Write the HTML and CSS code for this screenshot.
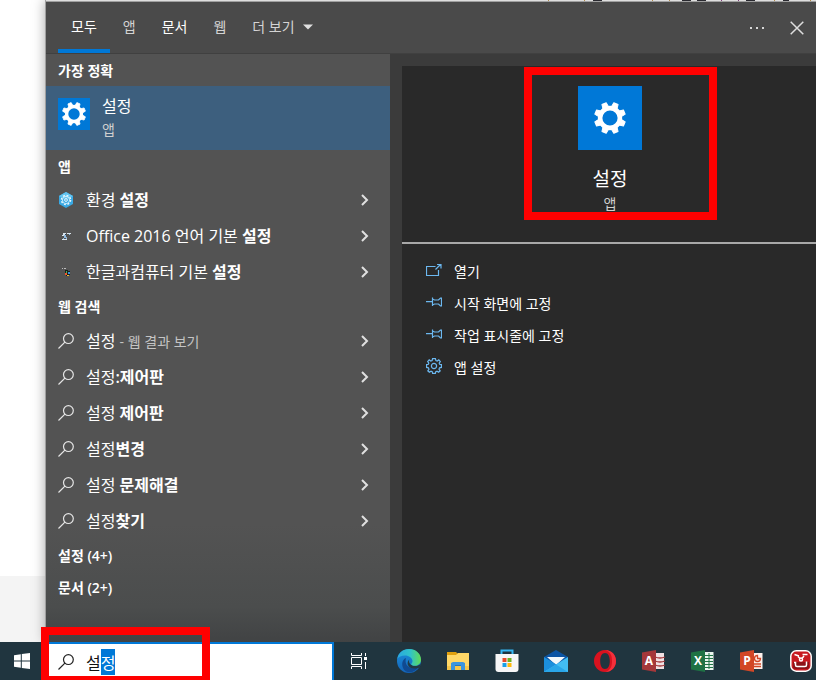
FILE: index.html
```html
<!DOCTYPE html>
<html lang="ko">
<head>
<meta charset="utf-8">
<title>검색</title>
<link rel="stylesheet" href="styles.css">
</head>
<body>
<svg class="defs" aria-hidden="true">
  <symbol id="gear" viewBox="-16 -16 32 32">
    <circle r="9.9" fill="none" stroke="#fff" stroke-width="4.6"/>
    <g fill="#fff" stroke="#fff" stroke-width="1" stroke-linejoin="round">
      <path id="tooth" d="M-3-11-2.300-15.500H2.300L3-11z" transform="rotate(22.500)"/>
      <use href="#tooth" transform="rotate(45)"/>
      <use href="#tooth" transform="rotate(90)"/>
      <use href="#tooth" transform="rotate(135)"/>
      <use href="#tooth" transform="rotate(180)"/>
      <use href="#tooth" transform="rotate(225)"/>
      <use href="#tooth" transform="rotate(270)"/>
      <use href="#tooth" transform="rotate(315)"/>
    </g>
  </symbol>
  <symbol id="lens" viewBox="0 0 16 16"><circle cx="10.4" cy="5.6" r="4.9"/><path d="M6.9 9.1.5 15.5"/></symbol>
  <symbol id="chev" viewBox="0 0 8 12"><path d="m1 1 5 5-5 5"/></symbol>
  <symbol id="pin" viewBox="0 0 16 10"><path d="M0 4.6h6M6.5.5v8.5M6.5 2l2 1h4l2-2h1v8h-1l-2-2h-4l-2 1"/></symbol>
</svg>

<div class="screen">
  <main class="workspace">
    <div class="desktop"><div class="sheet"></div></div>
    <section class="search-panel" aria-label="검색">
      <div class="backdrop">
        <svg viewBox="0 0 276 1" width="276" height="1"><path fill="#b08a4a" d="M8 0h1v1H8zM44 0h1v1h-1zM112 0h1v1h-1zM129 0h1v1h-1zM234 0h1v1h-1zM270 0h1v1h-1z"/><path fill="#7f3d7a" d="M181 0h1v1h-1zM198 0h1v1h-1z"/><path fill="#2a2a30" d="M53 0h9v1h-9zM142 0h9v1h-9zM157 0h9v1h-9zM206 0h9v1h-9zM243 0h6v1h-6z"/></svg>
      </div>
      <header class="topbar">
        <nav class="tabs">
          <button class="tab active">모두</button>
          <button class="tab dim">앱</button>
          <button class="tab">문서</button>
          <button class="tab dim">웹</button>
          <button class="tab dim">더 보기 <svg class="caret" viewBox="0 0 10 6"><path d="M0 .5h10L5 5.5z"/></svg></button>
        </nav>
        <div class="window-actions">
          <button aria-label="옵션"><svg class="dots" viewBox="0 0 14 2"><path d="M0 0h2v2H0zM6 0h2v2H6zM12 0h2v2h-2z"/></svg></button>
          <button aria-label="닫기"><svg class="close" viewBox="0 0 14 14"><path d="m.7.7 12.6 12.6M13.3.7.7 13.3"/></svg></button>
        </div>
      </header>

      <div class="columns">
        <div class="results">
          <h2>가장 정확</h2>
          <button class="best">
            <span class="tile small"><svg><use href="#gear"/></svg></span>
            <span class="best-text"><span class="best-name">설정</span><span class="kind">앱</span></span>
          </button>

          <h2>앱</h2>
          <button class="row">
            <svg class="icon" viewBox="0 0 16 16"><path fill="#39a9e4" d="M8 0l7 4v8l-7 4-7-4V4z"/><path fill="#63c4f0" d="M8 0l7 4-7 4-7-4z"/><g fill="none" stroke="#e6f7ff"><circle cx="8" cy="8" r="1.4"/><circle cx="8" cy="8" r="4.6" stroke-width="1.4" stroke-dasharray="1.9 1.713"/><circle cx="8" cy="8" r="3.6" stroke-width=".8"/></g></svg>
            <span>환경 <b>설정</b></span><svg class="chev"><use href="#chev"/></svg>
          </button>
          <button class="row">
            <svg class="icon" viewBox="0 0 16 16"><path fill="#d9e4ec" d="M5 5h3v2H5zM9 5h4v1H9zM4 7h2v1H4zM4 11h5v1H4z"/><path fill="#8fb9de" d="M6 7h2v3H6zM5 10h1v1H5zM8 9h1v2H8zM11 6h1v1h-1z"/><path fill="#29435c" d="M7 6h1v1H7z"/></svg>
            <span>Office 2016 언어 기본 <b>설정</b></span><svg class="chev"><use href="#chev"/></svg>
          </button>
          <button class="row">
            <svg class="icon" viewBox="0 0 16 16"><path fill="#bbb" d="M4 4h1v1H4zM6 4h2v1H6z"/><path fill="#1c1f1e" d="M7 6h3v1h2v4h-1v1H8v-1H7z"/><path fill="#ef5a2c" d="M7 9h2v2H7z"/><path fill="#41b357" d="M8 7h1v2H8z"/><path fill="#2f91dc" d="M10 8h2v2h-2z"/><path fill="#f5b52e" d="M9 11h2v1H9z"/></svg>
            <span>한글과컴퓨터 기본 <b>설정</b></span><svg class="chev"><use href="#chev"/></svg>
          </button>

          <h2>웹 검색</h2>
          <div class="web">
            <button class="row"><svg class="icon lens"><use href="#lens"/></svg><span>설정 <span class="note">- 웹 결과 보기</span></span><svg class="chev"><use href="#chev"/></svg></button>
            <button class="row"><svg class="icon lens"><use href="#lens"/></svg><span>설정<b>:제어판</b></span><svg class="chev"><use href="#chev"/></svg></button>
            <button class="row"><svg class="icon lens"><use href="#lens"/></svg><span>설정 <b>제어판</b></span><svg class="chev"><use href="#chev"/></svg></button>
            <button class="row"><svg class="icon lens"><use href="#lens"/></svg><span>설정<b>변경</b></span><svg class="chev"><use href="#chev"/></svg></button>
            <button class="row"><svg class="icon lens"><use href="#lens"/></svg><span>설정 <b>문제해결</b></span><svg class="chev"><use href="#chev"/></svg></button>
            <button class="row"><svg class="icon lens"><use href="#lens"/></svg><span>설정<b>찾기</b></span><svg class="chev"><use href="#chev"/></svg></button>
          </div>
          <h2>설정 (4+)</h2>
          <h2>문서 (2+)</h2>
        </div>

        <article class="detail">
          <div class="hero">
            <span class="tile large"><svg><use href="#gear"/></svg></span>
            <h1>설정</h1>
            <span class="kind">앱</span>
            <span class="mark mark-hero"></span>
          </div>
          <div class="actions">
            <button><svg viewBox="0 0 16 12"><path d="M9.5 2.5H.5v9h12V6M9.5 5.5l5-5M11 .5h4v4"/></svg>열기</button>
            <button><svg viewBox="0 0 16 10"><use href="#pin"/></svg>시작 화면에 고정</button>
            <button><svg viewBox="0 0 16 10"><use href="#pin"/></svg>작업 표시줄에 고정</button>
            <button><svg viewBox="-8 -8 16 16"><circle r="2.6"/><path d="M-1.4-7.4H1.4L1.9-5.5 3.2-5 4.8-6.1 6.3-4.5 5.2-2.9 5.6-1.7 7.4-1.4V1.4L5.6 1.8 5 3.1 6.2 4.8 4.6 6.3 3 5.2 1.8 5.7 1.4 7.4H-1.4L-1.8 5.7-3 5.2-4.6 6.3-6.2 4.8-5 3.1-5.6 1.8-7.4 1.4V-1.4L-5.6-1.7-5.2-2.9-6.3-4.5-4.8-6.1-3.2-5-1.9-5.5Z"/></svg>앱 설정</button>
          </div>
        </article>
      </div>
    </section>
  </main>

  <footer class="taskbar">
    <button class="start" aria-label="시작"><svg viewBox="0 0 16 16"><path fill="#fff" d="M0 2.2 6.8 1.2v6.3H0zM7.8 1 16 0v7.5H7.8zM0 8.5h6.8v6.3L0 13.8zM7.8 8.5H16V16l-8.2-1.1z"/></svg></button>
    <label class="searchbox">
      <svg class="lens"><use href="#lens"/></svg>
      <input id="query" type="text" value="설정" aria-label="검색어" spellcheck="false" autocomplete="off">
      <span class="mark mark-search"></span>
    </label>
    <button class="taskview" aria-label="작업 보기"><svg viewBox="0 0 16 16" width="16" height="16"><path fill="none" stroke="#fff" d="M.5 0v2.5h10V0M.5 4.5h10v7H.5zM.5 16v-2.500h10V16M14.500 0v3M14.500 9v7"/><path fill="#fff" d="M13 4h3v3h-3z"/></svg></button>
    <button class="app" aria-label="Edge"><svg viewBox="0 0 24 24" width="24" height="24">
      <defs><linearGradient id="eg" x1="0" x2="1"><stop offset="0" stop-color="#2aa7e0"/><stop offset=".55" stop-color="#30c3c9"/><stop offset="1" stop-color="#62dc55"/></linearGradient><linearGradient id="eb" x1="0" y1="0" x2="0" y2="1"><stop offset="0" stop-color="#1b91dc"/><stop offset="1" stop-color="#1463b7"/></linearGradient></defs>
      <circle cx="12" cy="12" r="12" fill="url(#eb)"/>
      <path fill="#104a91" d="M9 9c-2 7 3 12 12.500 9C18 24 9 25.500 6 19 4 14 6 10 9 9z"/>
      <path fill="#223a44" d="M12.500 10.500c-1.500 2 .2 6 5 6.300 3 .2 5-.8 6.500-2.300l-1.500 4c-3 1.500-9 1.500-11-1.500-1.500-2.300-.8-5.300 1-6.500z"/>
      <path fill="url(#eg)" d="M.3 10C1 4 6 0 12 0c7 0 12 5 12 10.500 0 4-3 6.300-6.300 6.300-2 0-3.500-.6-3.500-1.500s1.300-1.300 1.300-3.300C15.500 9 12 6.500 8 6.500 4.500 6.500 1.500 8 .3 10z"/>
    </svg></button>
    <button class="app" aria-label="파일 탐색기"><svg viewBox="0 0 22 19" width="22" height="19"><path fill="#e0a00d" d="M0 0h9l2 2v3H0z"/><path fill="#ffd867" d="M0 3h9l2-2h11v17H0z"/><path fill="#f5c64a" d="M0 14h22v4H0z"/><path fill="#3a95df" d="M4 18v-7l2-1h10l2 1v7h-4v-4H8v4z"/><path fill="#2374be" d="M8 13h6v1H8z"/></svg></button>
    <button class="app" aria-label="Store"><svg viewBox="0 0 24 24" width="24" height="24"><path fill="none" stroke="#35b6f2" stroke-width="2" d="M6.500 6V1.500h11V6"/><path fill="#f6f6f6" d="M.5 5h23v15q0 3-3 3h-17q-3 0-3-3z"/><path fill="#e84a2a" d="M7.500 9h4v4h-4z"/><path fill="#6cb021" d="M12.500 9h4v4h-4z"/><path fill="#18a0e8" d="M7.500 14h4v4h-4z"/><path fill="#ffb90a" d="M12.500 14h4v4h-4z"/></svg></button>
    <button class="app" aria-label="메일"><svg viewBox="0 0 24 22" width="24" height="22"><path fill="#0c55a4" d="M0 7 12 0l12 7v8H0z"/><path fill="#f3f8fb" d="M3 7h18l-9 8z"/><path fill="#1c8fdc" d="M0 7l24 14.500V22H0z"/><path fill="#42bdf3" d="M24 7 0 22h24z"/><path fill="#2aa6e8" d="m0 22 12-7.500L24 22z"/></svg></button>
    <button class="app" aria-label="Opera"><svg viewBox="0 0 22 22" width="22" height="22"><path fill="#d9121f" fill-rule="evenodd" d="M11 0C4.500 0 0 5 0 11s4.500 11 11 11 11-5 11-11S17.500 0 11 0zm0 3c3.200 0 4.800 3.500 4.800 8S14.200 19 11 19s-4.800-3.500-4.800-8S7.800 3 11 3z"/><path fill="#f5303b" d="M11 0c7 0 11 5 11 11s-4 11-11 11c6-2 7-6 7-11S17 2 11 0z"/></svg></button>
    <button class="app office access"><svg viewBox="0 0 24 22" width="24" height="22"><path fill="#f0e1e3" d="M13 3h9v16h-9z"/><path stroke="#a4373a" stroke-width="1.300" fill="none" d="M13 7q5 2 10 0M13 11q5 2 10 0M13 15q5 2 10 0"/><path fill="#a4373a" d="M0 2.500 14 0v22L0 19.500z"/></svg><span>A</span></button>
    <button class="app office excel"><svg viewBox="0 0 24 22" width="24" height="22"><path fill="#e9f5ed" d="M13 2h9.500v18H13z"/><path stroke="#1f7244" fill="none" d="M13 5.500h9M13 8.500h9M13 11.500h9M13 14.500h9M13 17.500h9M18 3v16"/><path fill="#1f7244" d="M0 2.500 14 0v22L0 19.500z"/></svg><span>X</span></button>
    <button class="app office ppt"><svg viewBox="0 0 24 22" width="24" height="22"><path fill="#fdf0eb" d="M13 3h9.500v16H13z"/><path stroke="#d24726" stroke-width="1.300" fill="none" d="M17.500 5.500a3 3 0 1 0 3 3h-3zM14 14h7M14 16.500h7"/><path fill="#d24726" d="M0 2.500 14 0v22L0 19.500z"/></svg><span>P</span></button>
    <button class="app" aria-label="캡처"><svg viewBox="0 0 22 22" width="22" height="22"><rect x=".8" y=".8" width="20.400" height="20.400" rx="5.500" fill="#c71920" stroke="#fff" stroke-width="1.500"/><path fill="#8d1218" d="M3 12h16v5q0 2-2 2H5q-2 0-2-2z"/><g fill="none" stroke="#fff" stroke-width="1.500"><path d="M4.500 4.500 9 6M12.500 4.500h5M8 6.500l2 2M14 6l-2 2.500"/><circle cx="11" cy="9.500" r="1.500"/><path d="M4 12.500h1.500V15q0 1.500 1.500 1.500h8q1.500 0 1.500-1.500v-3.500"/></g></svg></button>
  </footer>
</div>
<script src="script.js"></script>
</body>
</html>
```
FILE: script.js
```js
// The completed syllable stays selected so that typing replaces it.
const query = document.getElementById("query");
query.focus();
query.setSelectionRange(1, 2);
```
FILE: styles.css
```css
* { box-sizing: border-box; }

body {
  margin: 0;
  overflow: hidden;
  color: #fff;
  font: 14px/20px "Open Sans", "Noto Sans CJK KR", sans-serif;
}

button {
  border: 0;
  padding: 0;
  background: none;
  color: inherit;
  font: inherit;
  text-align: left;
}

svg { display: block; flex: none; }
.defs { position: absolute; width: 0; height: 0; }

.screen {
  display: flex;
  flex-direction: column;
  height: 100vh;
}

.workspace {
  flex: 1;
  min-height: 0;
  display: grid;
  grid-template-columns: 45px 1fr;
}

.desktop {
  display: flex;
  flex-direction: column;
  justify-content: flex-end;
  background: #fff;
}
.sheet { height: 66px; background: #f4f4f4; }

.search-panel {
  display: flex;
  flex-direction: column;
  min-width: 0;
  border-left: 1px solid #a0a0a0;
  background: #3b3b3b;
  box-shadow: 0 0 12px rgba(0, 0, 0, 0.35);
}
.backdrop {
  display: flex;
  justify-content: flex-end;
  height: 2px;
  border-bottom: 1px solid #a0a0a0;
  background: #dedede;
}

.topbar {
  display: flex;
  justify-content: space-between;
  height: 52px;
  padding-left: 12px;
  border-bottom: 1px solid #404040;
  background: #4a4a4a;
}
.tabs { display: flex; }
.tab {
  display: flex;
  align-items: center;
  gap: 8px;
  padding: 5px 13px 3px;
  border-bottom: 4px solid transparent;
}
.tab.dim { color: #d4d4d4; }
.tab.active { border-bottom-color: #0078d7; }
.caret { width: 10px; height: 6px; fill: #e0e0e0; }

.window-actions { display: flex; }
.window-actions button {
  display: flex;
  align-items: center;
  justify-content: center;
  width: 42px;
}
.window-actions button:last-child { width: 38px; }
.dots { width: 16px; height: 2px; fill: #d8d8d8; }
.close { width: 14px; height: 14px; stroke: #dedede; stroke-width: 1.5; }

.columns {
  flex: 1;
  min-height: 0;
  display: grid;
  grid-template-columns: 344px 1fr;
  column-gap: 12px;
}

.results {
  display: flex;
  flex-direction: column;
  background: linear-gradient(#535353 80%, #4b4d4d 94%, #414344);
}
h2 {
  margin: 0;
  padding: 7px 12px 5px;
  font-size: 14px;
  font-weight: 600;
  line-height: 20px;
}
.best {
  display: flex;
  gap: 12px;
  padding: 8px 12px;
  height: 64px;
  background: #3d5f7e;
}
.best-text { display: flex; flex-direction: column; }
.best-name { font-size: 16px; line-height: 24px; }
.kind { color: #d0d0d0; font-size: 14px; line-height: 24px; }

.tile {
  display: flex;
  align-items: center;
  justify-content: center;
  background: #0078d7;
}
.tile.small { width: 32px; height: 32px; margin-top: 4px; }
.tile.small svg { width: 24px; height: 24px; }
.tile.large { width: 64px; height: 64px; }
.tile.large svg { width: 32px; height: 32px; }

.row {
  display: flex;
  align-items: center;
  width: 100%;
  height: 36px;
  padding: 0 21px 0 12px;
  font-size: 16px;
}
.row > span { flex: 1; padding-left: 12px; }
.row b { font-weight: 600; }
.row .note { color: #c4c4c4; font-size: 14px; }
.web { padding-top: 1px; }
.icon { width: 16px; height: 16px; }
.lens {
  width: 16px;
  height: 16px;
  fill: none;
  stroke: #e6e6e6;
  stroke-width: 1.2;
}
.chev { width: 8px; height: 12px; fill: none; stroke: #e0e0e0; stroke-width: 2; }

.detail {
  margin-top: 12px;
  background: #292929;
}
.hero {
  position: relative;
  display: flex;
  flex-direction: column;
  align-items: center;
  height: 178px;
  padding: 20px 0 0 2px;
  border-bottom: 2px solid #a8a8a8;
}
h1 {
  margin: 16px 0 0;
  font-size: 19px;
  font-weight: 400;
  line-height: 26px;
}
.actions { display: flex; flex-direction: column; padding: 12px 24px; }
.actions button {
  display: flex;
  align-items: center;
  gap: 12px;
  height: 32px;
}
.actions svg {
  width: 16px;
  margin-bottom: 4px;
  fill: none;
  stroke: #6cb8f0;
  stroke-width: 1.2;
}

.mark {
  position: absolute;
  border: 8px solid #f00;
  pointer-events: none;
}
.mark-hero { top: 1px; left: 122px; width: 193px; height: 153px; }
.mark-search { top: -17px; left: -5px; width: 169px; height: 57px; }

.taskbar {
  display: flex;
  height: 38px;
  background: #20353f;
}
.taskbar > button {
  position: relative;
  flex: none;
  display: flex;
  align-items: center;
  justify-content: center;
}
.start { width: 46px; }
.start svg { width: 16px; height: 16px; margin-right: 2px; }
.searchbox {
  position: relative;
  display: flex;
  align-items: center;
  gap: 12px;
  flex: none;
  width: 288px;
  padding-left: 12px;
  border: solid #0078d7;
  border-width: 2px 2px 0 0;
  background: #fff;
}
.searchbox .lens { stroke: #222; }
.searchbox input {
  flex: 1;
  min-width: 0;
  padding: 0;
  border: 0;
  outline: 0;
  background: none;
  color: #111;
  font: 16px/26px "Noto Sans CJK KR", sans-serif;
}
.searchbox input::selection { background: #0078d7; color: #fff; }
.taskview { width: 50px; }
.app { width: 49px; }
.office span {
  position: absolute;
  left: 13px;
  width: 14px;
  color: #fff;
  font-size: 12px;
  font-weight: 700;
  text-align: center;
}
```
